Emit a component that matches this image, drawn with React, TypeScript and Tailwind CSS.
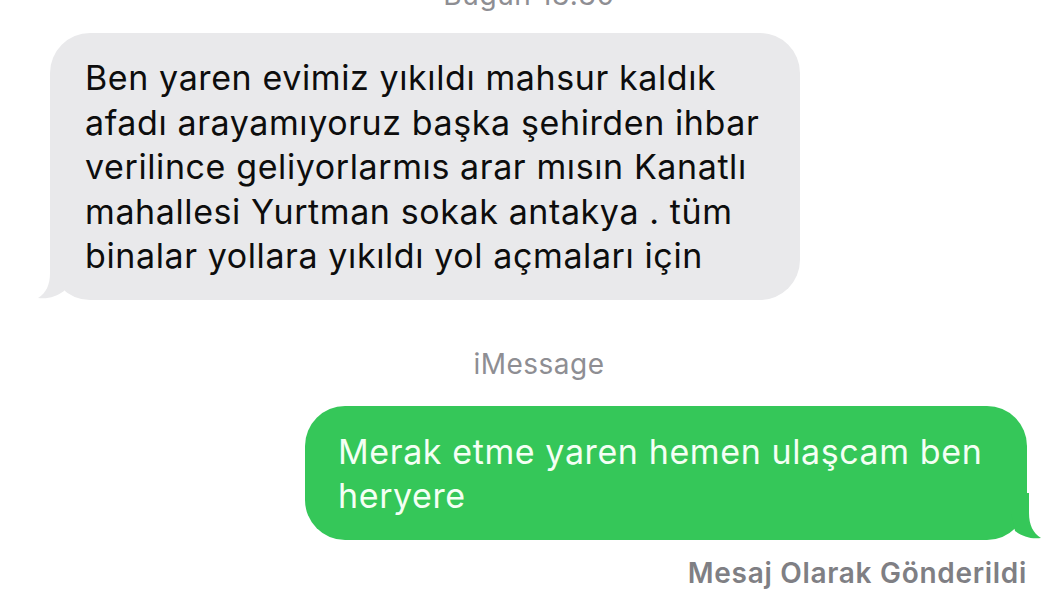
import React from "react";

const font = { fontFamily: "Inter, 'Noto Sans', sans-serif" };

function LeftTail() {
  return (
    <svg
      className="absolute -left-[12px] bottom-0"
      width="52"
      height="47"
      viewBox="0 0 52 47"
      aria-hidden
    >
      <path
        d="M12 0 L12 20 C12 32 8 40 0 45 C10 46.5 19 43 26 38 L30 20 L30 0 Z"
        fill="#e9e9eb"
      />
    </svg>
  );
}

function RightTail() {
  return (
    <svg
      className="absolute -right-[14px] bottom-0 -scale-x-100"
      width="52"
      height="47"
      viewBox="0 0 52 47"
      aria-hidden
    >
      <path
        d="M12 0 L12 20 C12 32 8 40 0 45 C10 46.5 19 43 26 38 L30 20 L30 0 Z"
        fill="#35c759"
      />
    </svg>
  );
}

export default function App() {
  return (
    <div
      className="w-[1058px] h-[595px] overflow-hidden bg-white flex flex-col"
      style={font}
    >
      <div className="-mt-[19px] text-center text-[28px] leading-[28px] tracking-[0.6px] text-[#8e8e93]">
        Bugün 13:30
      </div>

      <div className="mt-[24px] ml-[50px] relative w-[750px] rounded-[40px] bg-[#e9e9eb] pl-[35px] pr-[20px] pt-[23px] pb-[21px]">
        <p className="text-[34px] leading-[44.5px] tracking-[0.6px] text-[#0d0d0d]">
          Ben yaren evimiz yıkıldı mahsur kaldık
          <br />
          afadı arayamıyoruz başka şehirden ihbar
          <br />
          verilince geliyorlarmıs arar mısın Kanatlı
          <br />
          mahallesi Yurtman sokak antakya . tüm
          <br />
          binalar yollara yıkıldı yol açmaları için
        </p>
        <LeftTail />
      </div>

      <div className="mt-[49px] text-center text-[28px] leading-[30px] tracking-[0.5px] text-[#8e8e93] pl-[20px]">
        iMessage
      </div>

      <div className="mt-[27px] ml-[305px] relative w-[722px] rounded-[40px] bg-[#35c759] pl-[33px] pr-[20px] pt-[24px] pb-[21px]">
        <p className="text-[34px] leading-[44.5px] tracking-[0.6px] text-[#f4fff4]">
          Merak etme yaren hemen ulaşcam ben
          <br />
          heryere
        </p>
        <RightTail />
      </div>

      <div className="mt-[18px] pr-[31px] text-right text-[28px] leading-[30px] tracking-[0.7px] font-semibold text-[#7f7f84]">
        Mesaj Olarak Gönderildi
      </div>
    </div>
  );
}
